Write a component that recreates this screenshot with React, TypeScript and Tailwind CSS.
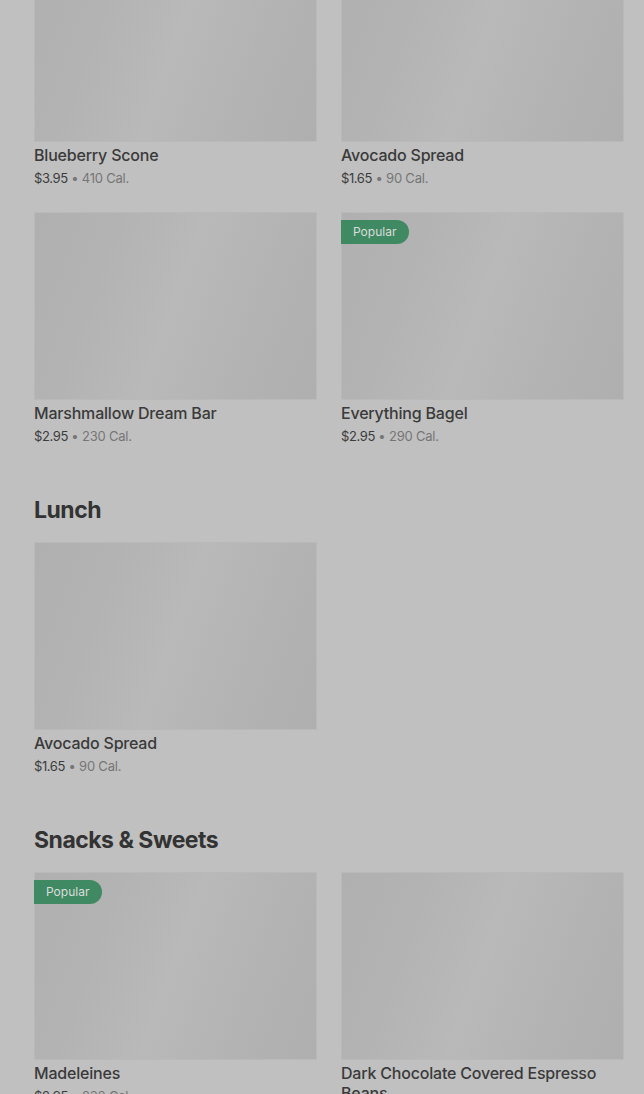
import React from "react";

type Item = { name: string; price: string; cal: string; popular?: boolean };

const sections: { title?: string; items: Item[] }[] = [
  {
    items: [
      { name: "Blueberry Scone", price: "$3.95", cal: "410 Cal." },
      { name: "Avocado Spread", price: "$1.65", cal: "90 Cal." },
      { name: "Marshmallow Dream Bar", price: "$2.95", cal: "230 Cal." },
      { name: "Everything Bagel", price: "$2.95", cal: "290 Cal.", popular: true },
    ],
  },
  { title: "Lunch", items: [{ name: "Avocado Spread", price: "$1.65", cal: "90 Cal." }] },
  {
    title: "Snacks & Sweets",
    items: [
      { name: "Madeleines", price: "$2.95", cal: "230 Cal.", popular: true },
      { name: "Dark Chocolate Covered Espresso Beans", price: "$2.95", cal: "210 Cal." },
    ],
  },
];

function Card({ item }: { item: Item }) {
  return (
    <div className="flex flex-col">
      <div className="relative h-[188px] w-full bg-[linear-gradient(110deg,#b0b0b0_0%,#b3b3b3_25%,#b9b9b9_50%,#b3b3b3_75%,#afafaf_100%)] border border-[#b9b9b9]">
        {item.popular && (
          <div className="absolute left-[-1px] top-[7px] h-[24px] rounded-r-full bg-[#3f8a62] pl-3 pr-[13px] text-[12px] leading-[24px] text-[#dcdcdc]">
            Popular
          </div>
        )}
      </div>
      <div className="mt-[3px] text-[16px] font-medium leading-5 tracking-[-0.2px] text-[#3a3a3a]">{item.name}</div>
      <div className="mt-[3px] text-[13px] leading-5">
        <span className="text-[#3c3c3c] tracking-[-0.4px]">{item.price}</span>
        <span className="text-[#767676] tracking-[-0.2px]"> • {item.cal}</span>
      </div>
    </div>
  );
}

export default function App() {
  return (
    <div
      className="min-h-[1094px] w-full overflow-hidden bg-[#c0c0c0] pl-[34px] pr-5"
      style={{ fontFamily: "Inter, 'Noto Sans', sans-serif" }}
    >
      <div className="-mt-[46px] flex flex-col">
        {sections.map((s, i) => (
          <div key={i} className={s.title ? "mt-[50px]" : ""}>
            {s.title && (
              <h2 className="mb-[18px] text-[23px] font-bold leading-[28px] tracking-[-0.5px] text-[#333333]">
                {s.title}
              </h2>
            )}
            <div className="grid grid-cols-2 gap-x-6 gap-y-6">
              {s.items.map((it, j) => (
                <Card key={j} item={it} />
              ))}
            </div>
          </div>
        ))}
      </div>
    </div>
  );
}
